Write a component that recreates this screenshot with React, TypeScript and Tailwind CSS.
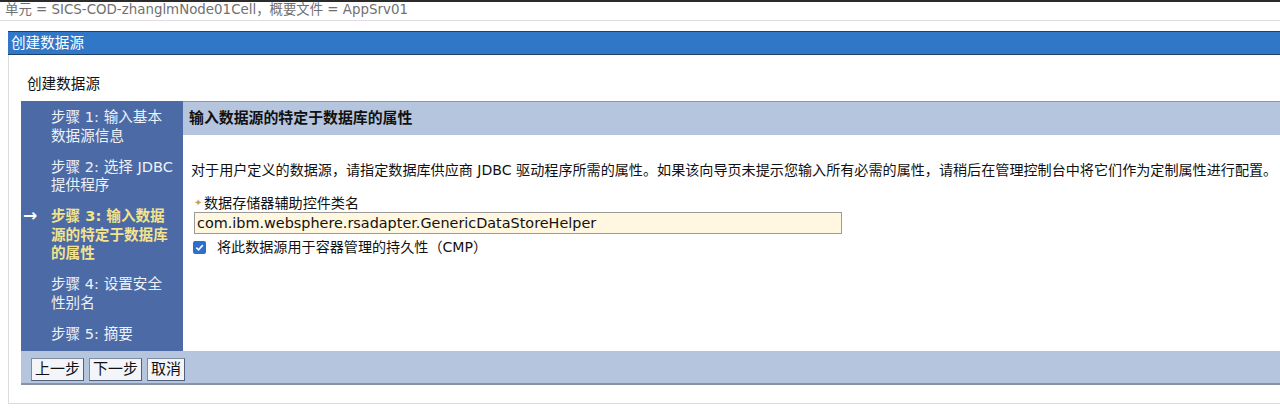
import React from "react";

const steps = [
  { lines: ["步骤 1: 输入基本", "数据源信息"], current: false },
  { lines: ["步骤 2: 选择 JDBC", "提供程序"], current: false },
  { lines: ["步骤 3: 输入数据", "源的特定于数据库", "的属性"], current: true },
  { lines: ["步骤 4: 设置安全", "性别名"], current: false },
  { lines: ["步骤 5: 摘要"], current: false },
];

const App: React.FC = () => {
  return (
    <div className="w-[1280px] h-[411px] overflow-hidden bg-white border-t-2 border-[#2b2b2b] font-['DejaVu_Sans','Noto_Sans_CJK_SC',sans-serif] text-[14.6px]">
      <div className="h-[18px] px-[5px] leading-[16px] text-[13.4px] text-[#707070] whitespace-nowrap">
        单元 = SICS-COD-zhanglmNode01Cell，概要文件 = AppSrv01
      </div>
      <div className="h-px bg-[#e2dde2]" />

      <div className="ml-[8px] mt-[10px]">
        <div className="h-[24px] bg-[#3177c7] border-y border-[#1f3e6c] pl-[3px] leading-[22px] text-white">
          创建数据源
        </div>
        <div className="border-l border-b border-[#dcdcdc] pl-[12px] pb-[18px]">
          <div className="h-[46px] pl-[6px] pt-[20px] leading-[18px] text-[#111]">创建数据源</div>

          <div className="flex">
            <div className="w-[162px] shrink-0 bg-[#4b6aa6] pt-[7px] pb-[8px] flex flex-col gap-[12.5px]">
              {steps.map((s, i) => (
                <div key={i} className="flex leading-[18.5px]">
                  <div className="w-[30px] pl-[2px] text-white text-[17px] font-bold leading-[17px]">
                    {s.current ? "→" : ""}
                  </div>
                  <div
                    className={
                      s.current
                        ? "text-[#f2e38c] font-bold whitespace-nowrap"
                        : "text-[#eef1f7] whitespace-nowrap"
                    }
                  >
                    {s.lines.map((l, j) => (
                      <div key={j}>{l}</div>
                    ))}
                  </div>
                </div>
              ))}
            </div>

            <div className="flex-1 min-w-0">
              <div className="h-[34px] bg-[#b5c5de] border-t border-[#8a96aa] pl-[6px] leading-[32px] font-bold text-[14.9px] text-[#111] whitespace-nowrap">
                输入数据源的特定于数据库的属性
              </div>
              <div className="pl-[8px] pt-[25px] text-[14.1px] text-[#111]">
                <div className="leading-[20px] whitespace-nowrap">
                  对于用户定义的数据源，请指定数据库供应商 JDBC 驱动程序所需的属性。如果该向导页未提示您输入所有必需的属性，请稍后在管理控制台中将它们作为定制属性进行配置。
                </div>
                <div className="mt-[14px] flex items-center leading-[18px] pl-[3px]">
                  <span className="text-[#c9a243] text-[10px] w-[10px]">✦</span>
                  <span>数据存储器辅助控件类名</span>
                </div>
                <div className="ml-[3px] w-[648px] h-[22px] bg-[#fff7df] border border-[#9a9a9a] px-[2px] leading-[20px] text-[14.4px] text-[#111]">
                  com.ibm.websphere.rsadapter.GenericDataStoreHelper
                </div>
                <div className="mt-[3px] flex items-center leading-[20px] pl-[2px]">
                  <span className="w-[13px] h-[13px] rounded-[2px] bg-[#2d6fce] flex items-center justify-center">
                    <svg width="11" height="11" viewBox="0 0 12 12">
                      <path d="M2.5 6.2 L5 8.6 L9.6 3.4" stroke="white" strokeWidth="1.8" fill="none" />
                    </svg>
                  </span>
                  <span className="ml-[11px]">将此数据源用于容器管理的持久性（CMP）</span>
                </div>
              </div>
            </div>
          </div>

          <div className="h-[34px] bg-[#b5c5de] border-b-2 border-[#8a93a3] flex items-center gap-[5px] pl-[10px] pt-[4px]">
            {["上一步", "下一步", "取消"].map((b) => (
              <button
                key={b}
                className="h-[23px] px-[3px] bg-[#f3f5f9] border border-[#7d8ba3] border-r-[#50607c] border-b-[#50607c] leading-[20px] text-[15px] text-[#111]"
              >
                {b}
              </button>
            ))}
          </div>
        </div>
      </div>
    </div>
  );
};

export default App;
